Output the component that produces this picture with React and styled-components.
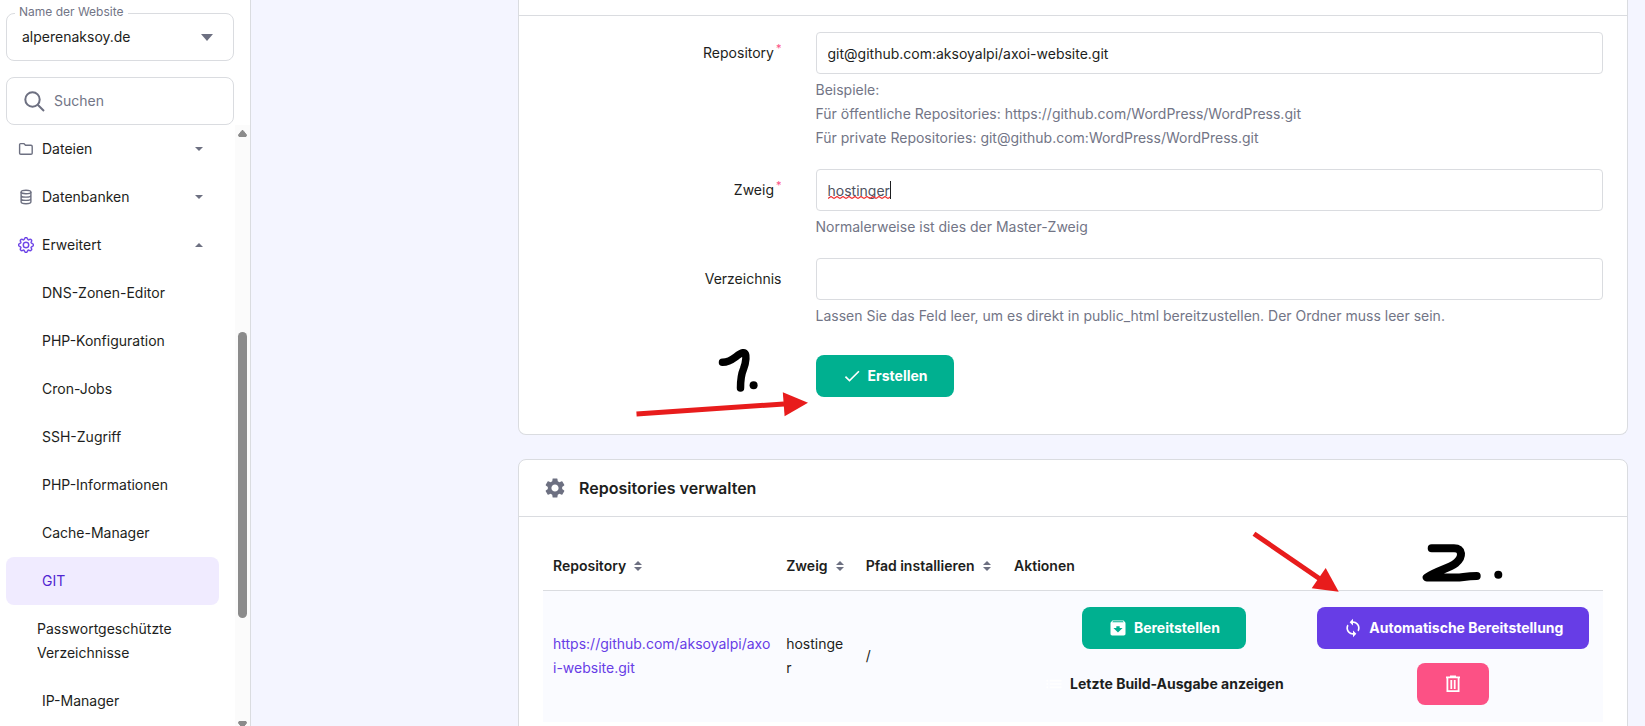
import React from 'react';
import styled, { createGlobalStyle, css } from 'styled-components';
import { MdArchive, MdCheck, MdList, MdSettings, MdSync } from 'react-icons/md';
import { BsGear } from 'react-icons/bs';

const c = {
  text: '#1d1e20',
  muted: '#727586',
  icon: '#6d7081',
  line: '#dadce0',
  page: '#f4f5ff',
  purple: '#673de6',
  purpleDark: '#5025d1',
  purpleSoft: '#f0ebff',
  green: '#00b090',
  pink: '#fc5185',
  red: '#e81c1c',
};

const GlobalStyle = createGlobalStyle`
  * { box-sizing: border-box; }
  body {
    margin: 0;
    overflow: hidden;
    background: ${c.page};
    color: ${c.text};
    font: 14px/24px Inter, 'Liberation Sans', sans-serif;
  }
  button, input, select { font: inherit; color: inherit; }
`;

const Shell = styled.div`
  display: flex;
  height: 100vh;
  overflow: hidden;
`;

const Sidebar = styled.aside`
  display: flex;
  flex-direction: column;
  flex: 0 0 251px;
  min-width: 0;
  background: #fff;
  border-right: 1px solid ${c.line};
`;

const SidebarTop = styled.div`
  display: flex;
  flex-direction: column;
  gap: 16px;
  padding: 13px 16px 0 6px;
`;

const FieldBox = styled.div`
  position: relative;
  display: flex;
  align-items: center;
  height: 48px;
  border: 1px solid ${c.line};
  border-radius: 8px;
`;

const FloatingLabel = styled.label`
  position: absolute;
  top: -10px;
  left: 8px;
  padding: 0 4px;
  background: #fff;
  color: ${c.muted};
  font-size: 12px;
  line-height: 16px;
`;

const SiteSelect = styled.select`
  width: 100%;
  height: 100%;
  padding: 0 15px;
  border: 0;
  background: transparent;
  appearance: none;
  outline: none;
`;

const SelectArrow = styled.span`
  position: absolute;
  right: 20px;
  display: flex;
  color: ${c.icon};
  pointer-events: none;
`;

const SearchLabel = styled.label`
  display: flex;
  padding: 0 9px 0 17px;
  color: ${c.icon};
`;

const SearchInput = styled.input`
  flex: 1;
  min-width: 0;
  padding: 0;
  border: 0;
  outline: none;
  background: transparent;
  &::placeholder { color: ${c.muted}; opacity: 1; }
`;

const NavArea = styled.div`
  display: flex;
  flex: 1;
  min-height: 0;
  overflow: hidden;
`;

const NavList = styled.ul`
  flex: 1;
  min-width: 0;
  margin: 0;
  padding: 0 16px 0 6px;
  list-style: none;
`;

const navRow = css`
  display: flex;
  align-items: center;
  width: 100%;
  min-height: 48px;
  border: 0;
  border-radius: 8px;
  background: transparent;
  color: ${c.text};
  text-align: left;
  text-decoration: none;
`;

const NavGroup = styled.button`
  ${navRow}
  padding: 0 16px 0 12px;
`;

const NavIcon = styled.span`
  display: flex;
  justify-content: center;
  width: 16px;
  margin-right: 8px;
  color: ${(p) => (p.$active ? c.purple : c.icon)};
`;

const NavText = styled.span`
  flex: 1;
`;

const NavArrow = styled.span`
  display: flex;
  color: ${c.icon};
`;

const NavLink = styled.a`
  ${navRow}
  padding: 0 24px 0 ${(p) => (p.$wrap ? 31 : 36)}px;
  ${(p) => p.$wrap && css`min-height: 72px;`}
  ${(p) => p.$active && css`
    background: ${c.purpleSoft};
    color: ${c.purpleDark};
  `}
`;

const ScrollTrack = styled.div`
  display: flex;
  flex-direction: column;
  align-items: center;
  width: 15px;
  padding-top: 5px;
  background: #fbfbfb;
  color: #8b8b8b;
`;

const ScrollSpace = styled.div`
  flex: ${(p) => p.$grow} 0 0;
`;

const ScrollThumb = styled.div`
  flex: 286 0 0;
  width: 9px;
  border-radius: 5px;
  background: currentColor;
`;

const ScrollEnd = styled.div`
  display: flex;
  align-items: flex-start;
  flex: none;
  height: ${(p) => p.$height}px;
  overflow: hidden;
`;

const Main = styled.main`
  display: flex;
  flex-direction: column;
  flex: 1;
  gap: 24px;
  min-width: 0;
  padding: 0 17px 24px 267px;
`;

const Card = styled.section`
  position: relative;
  flex: none;
  border: 1px solid ${c.line};
  border-radius: 8px;
  background: #fff;
  ${(p) => p.$continued && css`
    border-top: 0;
    border-radius: 0 0 8px 8px;
  `}
`;

const CardHeader = styled.header`
  display: flex;
  align-items: center;
  gap: 12px;
  min-height: 16px;
  padding: ${(p) => (p.$titled ? '16px 24px' : 0)};
  border-bottom: 1px solid ${c.line};
`;

const CardTitle = styled.h2`
  margin: 0;
  font-size: 16px;
  font-weight: 600;
  line-height: 24px;
`;

const Form = styled.form`
  display: flex;
  flex-direction: column;
  gap: 19px;
  padding: 16px 9px 37px;
`;

const FormRow = styled.div`
  display: flex;
`;

const FormLabel = styled.label`
  flex: 0 0 25%;
  padding: 9px 19px 0 0;
  text-align: right;
`;

const Required = styled.sup`
  margin-left: 2px;
  color: ${c.pink};
  font-size: 11px;
  line-height: 1;
`;

const Control = styled.div`
  position: relative;
  flex: 1;
  padding: 0 15px;
`;

const TextInput = styled.input`
  display: block;
  width: 100%;
  height: 42px;
  padding: 0 11px;
  border: 1px solid ${c.line};
  border-radius: 4px;
  background: #fff;
  outline: none;
  ${(p) => p.$typing && css`
    color: #4f5260;
  `}
`;

const TypedMark = styled.span`
  position: absolute;
  top: 12px;
  left: 27px;
  height: 18px;
  border-right: 1px solid ${c.text};
  color: transparent;
  line-height: 18px;
  pointer-events: none;
  user-select: none;
`;

const Squiggle = styled.svg`
  position: absolute;
  left: 0;
  bottom: 0;
  width: 100%;
  height: 3px;
`;

const Hint = styled.div`
  padding-top: 4px;
  color: ${c.muted};
`;

const SubmitRow = styled.div`
  display: flex;
  position: relative;
  margin: 8px 0 0 25%;
  padding-left: 15px;
`;

const Button = styled.button`
  display: inline-flex;
  align-items: center;
  justify-content: center;
  gap: 6px;
  height: 42px;
  padding: 0 26px;
  border: 0;
  border-radius: 8px;
  background: ${(p) => p.$bg || 'transparent'};
  color: ${(p) => (p.$bg ? '#fff' : c.text)};
  font-weight: 700;
  white-space: nowrap;
  svg { flex: none; color: #fff; }
`;

const TableWrap = styled.div`
  padding: 26px 24px 24px;
`;

const Table = styled.table`
  width: 100%;
  border-collapse: collapse;
  table-layout: fixed;
`;

const Th = styled.th`
  width: ${(p) => p.$width || 'auto'};
  height: 47px;
  padding: 0 0 0 10px;
  border-bottom: 1px solid ${c.line};
  font-weight: 600;
  text-align: left;
  white-space: nowrap;
`;

const HeadCell = styled.span`
  display: flex;
  align-items: center;
  gap: 8px;
`;

const Td = styled.td`
  height: 132px;
  padding: 0 10px;
  background: #fafbff;
  word-break: break-all;
`;

const LinkTd = styled(Td)`
  padding-right: 2px;
  word-break: normal;
`;

const ActionsTd = styled(Td)`
  padding: 0 6px 0 14px;
`;

const RepoLink = styled.a`
  color: ${c.purple};
  text-decoration: none;
`;

const Actions = styled.div`
  display: grid;
  grid-template-columns: 1fr 1fr;
  justify-items: center;
  gap: 14px 0;
`;

const FirstNote = styled.svg`
  position: absolute;
  top: -15px;
  left: -170px;
  pointer-events: none;
`;

const SecondNote = styled.svg`
  position: absolute;
  top: 66px;
  right: 117px;
  pointer-events: none;
`;

function Triangle({ up, width = 8, height = 5 }) {
  const d = up
    ? `M0 ${height}L${width / 2} 0L${width} ${height}Z`
    : `M0 0H${width}L${width / 2} ${height}Z`;
  return (
    <svg width={width} height={height} aria-hidden="true">
      <path d={d} fill="currentColor" />
    </svg>
  );
}

function ScrollArrow({ down }) {
  return (
    <svg width="9" height="7" viewBox="0 0 9 7" aria-hidden="true">
      <path
        d={down ? 'M1 .5H8L8.5 2L5 6.5H4L.5 2Z' : 'M1 6.5H8L8.5 5L5 .5H4L.5 5Z'}
        fill="currentColor"
        stroke="currentColor"
        strokeLinejoin="round"
      />
    </svg>
  );
}

function SearchIcon() {
  return (
    <svg width="21" height="21" viewBox="0 0 21 21" fill="none" stroke="currentColor" strokeWidth="2" aria-hidden="true">
      <circle cx="8.5" cy="8.5" r="7.2" />
      <path d="M13.7 13.7L20 20" />
    </svg>
  );
}

function FolderIcon() {
  return (
    <svg width="16" height="14" viewBox="0 0 16 14" fill="none" stroke="currentColor" strokeWidth="1.4" aria-hidden="true">
      <path d="M1.6 2.6Q1.6 1.6 2.6 1.6H5.8L7.5 3.3H13Q14.2 3.3 14.2 4.5V11.2Q14.2 12.3 13 12.3H2.8Q1.6 12.3 1.6 11.2Z" strokeLinejoin="round" />
    </svg>
  );
}

function DatabaseIcon() {
  return (
    <svg width="12" height="16" viewBox="0 0 12 16" fill="none" stroke="currentColor" strokeWidth="1.4" aria-hidden="true">
      <ellipse cx="6" cy="3" rx="4.9" ry="1.8" />
      <path d="M1.1 3V12.8C1.1 15.3 10.9 15.3 10.9 12.8V3M1.1 6.2C1.1 8.7 10.9 8.7 10.9 6.2M1.1 9.500C1.1 12 10.9 12 10.9 9.500" />
    </svg>
  );
}

function SortIcon() {
  return (
    <svg width="8" height="10" viewBox="0 0 8 10" fill={c.icon} aria-hidden="true">
      <path d="M0 4L4 0L8 4ZM0 6H8L4 10Z" />
    </svg>
  );
}

function TrashIcon() {
  return (
    <svg width="20" height="18" viewBox="0 0 20 18" fill="none" stroke="currentColor" strokeWidth="1.8" aria-hidden="true">
      <path d="M3 2.4H17M7 1.4H13M4.4 3V16.1H15.6V3M8.3 5V14M11.7 5V14" />
    </svg>
  );
}

const groups = [
  { label: 'Dateien', icon: <FolderIcon /> },
  { label: 'Datenbanken', icon: <DatabaseIcon /> },
  { label: 'Erweitert', icon: <BsGear size={16} strokeWidth={0.4} />, open: true },
];

const links = [
  { label: 'DNS-Zonen-Editor' },
  { label: 'PHP-Konfiguration' },
  { label: 'Cron-Jobs' },
  { label: 'SSH-Zugriff' },
  { label: 'PHP-Informationen' },
  { label: 'Cache-Manager' },
  { label: 'GIT', active: true },
  { label: 'Passwortgeschützte Verzeichnisse', wrap: true },
  { label: 'IP-Manager' },
];

function SideNavigation() {
  return (
    <Sidebar>
      <SidebarTop>
        <FieldBox>
          <FloatingLabel htmlFor="site">Name der Website</FloatingLabel>
          <SiteSelect id="site" defaultValue="alperenaksoy.de">
            <option>alperenaksoy.de</option>
          </SiteSelect>
          <SelectArrow><Triangle width={12} height={7} /></SelectArrow>
        </FieldBox>
        <FieldBox>
          <SearchLabel htmlFor="search" aria-label="Suchen"><SearchIcon /></SearchLabel>
          <SearchInput id="search" placeholder="Suchen" />
        </FieldBox>
      </SidebarTop>
      <NavArea>
        <NavList>
          {groups.map((g) => (
            <li key={g.label}>
              <NavGroup type="button" aria-expanded={!!g.open}>
                <NavIcon $active={g.open}>{g.icon}</NavIcon>
                <NavText>{g.label}</NavText>
                <NavArrow><Triangle up={g.open} height={4} /></NavArrow>
              </NavGroup>
            </li>
          ))}
          {links.map((l) => (
            <li key={l.label}>
              <NavLink href="#" $active={l.active} $wrap={l.wrap}>{l.label}</NavLink>
            </li>
          ))}
        </NavList>
        <ScrollTrack aria-hidden="true">
          <ScrollEnd $height={7}><ScrollArrow /></ScrollEnd>
          <ScrollSpace $grow={195} />
          <ScrollThumb />
          <ScrollSpace $grow={103} />
          <ScrollEnd $height={5}><ScrollArrow down /></ScrollEnd>
        </ScrollTrack>
      </NavArea>
    </Sidebar>
  );
}

function CreateCard() {
  return (
    <Card $continued>
      <CardHeader />
      <Form onSubmit={(e) => e.preventDefault()}>
        <FormRow>
          <FormLabel htmlFor="repository">Repository<Required>*</Required></FormLabel>
          <Control>
            <TextInput id="repository" defaultValue="git@github.com:aksoyalpi/axoi-website.git" />
            <Hint>
              Beispiele:<br />
              Für öffentliche Repositories: https://github.com/WordPress/WordPress.git<br />
              Für private Repositories: git@github.com:WordPress/WordPress.git
            </Hint>
          </Control>
        </FormRow>
        <FormRow>
          <FormLabel htmlFor="branch">Zweig<Required>*</Required></FormLabel>
          <Control>
            <TextInput id="branch" $typing defaultValue="hostinger" />
            <TypedMark aria-hidden="true">
              hostinger
              <Squiggle>
                <defs>
                  <pattern id="wave" width="6" height="3" patternUnits="userSpaceOnUse">
                    <path d="M0 2.5L3 .5L6 2.5" fill="none" stroke="#f03030" strokeWidth="1.2" />
                  </pattern>
                </defs>
                <rect width="100%" height="3" fill="url(#wave)" />
              </Squiggle>
            </TypedMark>
            <Hint>Normalerweise ist dies der Master-Zweig</Hint>
          </Control>
        </FormRow>
        <FormRow>
          <FormLabel htmlFor="directory">Verzeichnis</FormLabel>
          <Control>
            <TextInput id="directory" />
            <Hint>Lassen Sie das Feld leer, um es direkt in public_html bereitzustellen. Der Ordner muss leer sein.</Hint>
          </Control>
        </FormRow>
        <SubmitRow>
          <Button type="submit" $bg={c.green}><MdCheck size={20} />Erstellen</Button>
          <FirstNote width="180" height="85" viewBox="0 0 180 85" aria-hidden="true">
            <path d="M5.500 74L153 64" stroke={c.red} strokeWidth="5" />
            <path d="M177 62.700L151.800 52.300L153.600 76.300Z" fill={c.red} />
            <path d="M91.500 22.300C101 22.500 106 14 112 12.700C117 12 114.500 24 112.500 29C109.500 36 109.500 42 109.500 48" fill="none" stroke="#000" strokeWidth="7.500" strokeLinecap="round" strokeLinejoin="round" />
            <circle cx="122.600" cy="45.300" r="4" />
          </FirstNote>
        </SubmitRow>
      </Form>
    </Card>
  );
}

function ManageCard() {
  return (
    <Card>
      <CardHeader $titled>
        <MdSettings size={24} color={c.icon} />
        <CardTitle>Repositories verwalten</CardTitle>
      </CardHeader>
      <TableWrap>
        <Table>
          <thead>
            <tr>
              <Th $width="22%"><HeadCell>Repository<SortIcon /></HeadCell></Th>
              <Th $width="7.5%"><HeadCell>Zweig<SortIcon /></HeadCell></Th>
              <Th $width="14%"><HeadCell>Pfad installieren<SortIcon /></HeadCell></Th>
              <Th>Aktionen</Th>
            </tr>
          </thead>
          <tbody>
            <tr>
              <LinkTd><RepoLink href="#">https://github.com/aksoyalpi/axo<wbr />i-website.git</RepoLink></LinkTd>
              <Td>hostinger</Td>
              <Td>/</Td>
              <ActionsTd>
                <Actions>
                  <Button type="button" $bg={c.green}><MdArchive size={20} />Bereitstellen</Button>
                  <Button type="button" $bg={c.purple}><MdSync size={20} />Automatische Bereitstellung</Button>
                  <Button type="button"><MdList size={20} />Letzte Build-Ausgabe anzeigen</Button>
                  <Button type="button" $bg={c.pink} aria-label="Löschen"><TrashIcon /></Button>
                </Actions>
              </ActionsTd>
            </tr>
          </tbody>
        </Table>
      </TableWrap>
      <SecondNote width="260" height="70" viewBox="0 0 260 70" aria-hidden="true">
        <path d="M4 7.700L70 53" stroke={c.red} strokeWidth="5" />
        <path d="M88.700 65.700L75.700 42L61.700 62.300Z" fill={c.red} />
        <path d="M181.700 22.300H204C213 22.300 213 31 206 37C198 43 187 44.500 176.700 51.600H206C213 51.600 215 50 226.700 50" fill="none" stroke="#000" strokeWidth="8" strokeLinecap="round" strokeLinejoin="round" />
        <circle cx="248.300" cy="48.700" r="4" />
      </SecondNote>
    </Card>
  );
}

export default function App() {
  return (
    <>
      <GlobalStyle />
      <Shell>
        <SideNavigation />
        <Main>
          <CreateCard />
          <ManageCard />
        </Main>
      </Shell>
    </>
  );
}
